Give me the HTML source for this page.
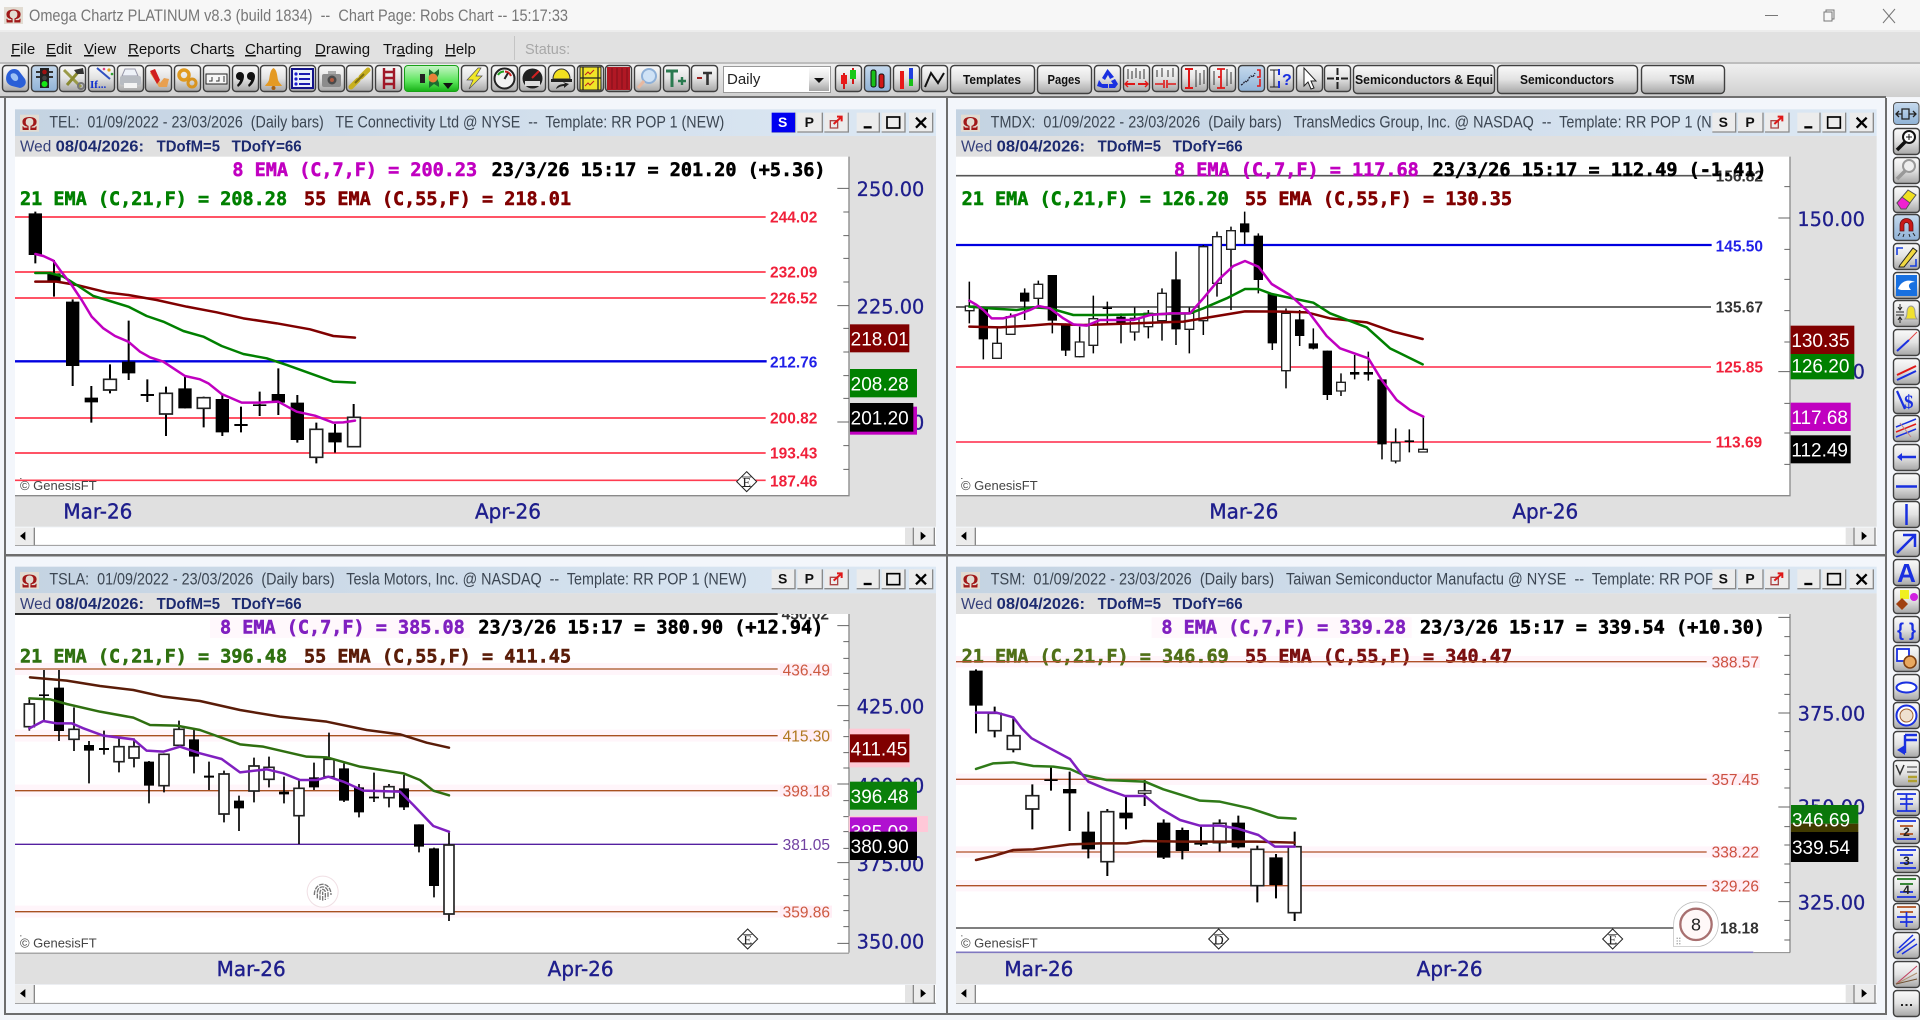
<!DOCTYPE html>
<html><head><meta charset="utf-8"><title>Omega Chartz</title>
<style>
html,body{margin:0;padding:0;background:#f3f5f9;width:1920px;height:1020px;overflow:hidden}
svg{display:block;position:absolute;left:0;top:0}
text{white-space:pre;font-family:"Liberation Sans",sans-serif}
.m{font:bold 55.5px "DejaVu Sans Mono","Liberation Mono",monospace;stroke-width:1.6}
.t{font-size:50px;fill:#3c4652}
.w{font-size:46px;fill:#35407a}
.d{font-size:48px;font-weight:bold;fill:#1c2a70}
.l{font-size:46.5px;font-weight:bold}
.a{font:58px "DejaVu Sans",sans-serif;fill:#1e1e8c;stroke:#1e1e8c;stroke-width:.8}
.x{font:60px "DejaVu Sans",sans-serif;fill:#1e1e8c;stroke:#1e1e8c;stroke-width:1.2}
.b{font-size:57px;fill:#fff}
.g{font-size:39px;fill:#444}
.mn{font-size:15px;fill:#111}
.tb{font-size:13px;font-weight:bold;fill:#111;text-anchor:middle}
.e{fill:none;stroke-width:7.5;stroke-linejoin:round;stroke-linecap:round}
.wk{fill:none;stroke:#000}
.tk{fill:none;stroke:#666;stroke-width:3}
</style></head><body>
<svg width="1920" height="1020" viewBox="0 0 1920 1020" xmlns="http://www.w3.org/2000/svg">
<defs>
<linearGradient id="bg" x1="0" y1="0" x2="0" y2="1"><stop offset="0" stop-color="#fbfbfb"/><stop offset=".5" stop-color="#e2e2e2"/><stop offset="1" stop-color="#a6a6a6"/></linearGradient>
<linearGradient id="bp" x1="0" y1="0" x2="0" y2="1"><stop offset="0" stop-color="#c6daee"/><stop offset="1" stop-color="#8fb2d6"/></linearGradient>
<linearGradient id="bgr" x1="0" y1="0" x2="0" y2="1"><stop offset="0" stop-color="#c8f5c8"/><stop offset=".6" stop-color="#5ce65c"/><stop offset="1" stop-color="#16b016"/></linearGradient>
<linearGradient id="tbg" x1="0" y1="0" x2="0" y2="1"><stop offset="0" stop-color="#efefef"/><stop offset="1" stop-color="#cfcfcf"/></linearGradient>
<linearGradient id="ttl" x1="0" y1="0" x2="1" y2="0"><stop offset="0" stop-color="#c4d3e2"/><stop offset="1" stop-color="#dce8f4"/></linearGradient>
<rect id="b" x=".5" y=".5" width="26" height="26" rx="3.5" fill="url(#bg)" stroke="#404040" stroke-width="1.4"/>
<rect id="p" x=".5" y=".5" width="26" height="26" rx="3.5" fill="url(#bp)" stroke="#404040" stroke-width="1.4"/>
<g id="om"><rect x="0" y="0" width="19" height="17" fill="#e2dcd2"/><text x="9.5" y="15.5" text-anchor="middle" style="font:bold 20px 'Liberation Serif',serif;fill:#a01818">Ω</text></g>
<g id="wc">
<rect width="70" height="59" fill="#ececec"/><path d="M0 58H70V0" fill="none" stroke="#8a8a8a" stroke-width="4"/><text x="33" y="43" text-anchor="middle" style="font:bold 42px 'Liberation Sans',sans-serif" fill="#111">S</text>
<rect x="77" width="75" height="59" fill="#ececec"/><path d="M77 58H152V0" fill="none" stroke="#8a8a8a" stroke-width="4"/><text x="113" y="43" text-anchor="middle" style="font:bold 42px 'Liberation Sans',sans-serif" fill="#111">P</text>
<rect x="158" width="72" height="59" fill="#ececec"/><path d="M158 58H230V0" fill="none" stroke="#8a8a8a" stroke-width="4"/><path d="M176 24h22v22h-22z" fill="none" stroke="#a44" stroke-width="4"/><path d="M186 34L208 14M196 12h14v14" fill="none" stroke="#e01818" stroke-width="6"/>
<rect x="255" width="68" height="59" fill="#ececec"/><path d="M255 58H323V0" fill="none" stroke="#8a8a8a" stroke-width="4"/><path d="M276 44h24" stroke="#000" stroke-width="7"/>
<rect x="330" width="70" height="59" fill="#ececec"/><path d="M330 58H400V0" fill="none" stroke="#8a8a8a" stroke-width="4"/><rect x="346" y="13" width="38" height="33" fill="none" stroke="#000" stroke-width="5"/>
<rect x="412" width="71" height="59" fill="#ececec"/><path d="M412 58H483V0" fill="none" stroke="#8a8a8a" stroke-width="4"/><path d="M433 15L463 45M463 15L433 45" stroke="#000" stroke-width="7"/>
</g>
<g id="dia"><path d="M0-30L30 0 0 30-30 0z" fill="#fff" stroke="#222" stroke-width="3"/><path d="M-14-14H14M-14 14H14" stroke="#222" stroke-width="2" fill="none"/></g>
</defs>

<!-- title bar -->
<rect width="1920" height="31" fill="#f7f7f7"/>
<rect y="30" width="1920" height="2" fill="#ececec"/>
<use href="#om" x="4" y="7"/>
<text x="29" y="21" textLength="539" lengthAdjust="spacingAndGlyphs" style="font-size:16.5px" fill="#777">Omega Chartz PLATINUM v8.3 (build 1834)  --  Chart Page: Robs Chart -- 15:17:33</text>
<path d="M1765 15.5H1778" stroke="#777" stroke-width="1"/>
<path d="M1824 12h8v9h-8zM1826 12v-2h8v9h-2" fill="none" stroke="#777"/>
<path d="M1883 9L1895 23M1895 9L1883 23" stroke="#777"/>

<!-- menu -->
<rect y="32" width="1920" height="31" fill="#e1e1e1"/>
<rect y="62" width="1920" height="2" fill="#bdbdbd"/>
<text class="mn" y="54" x="11"><tspan text-decoration="underline">F</tspan>ile</text>
<text class="mn" y="54" x="46"><tspan text-decoration="underline">E</tspan>dit</text>
<text class="mn" y="54" x="84"><tspan text-decoration="underline">V</tspan>iew</text>
<text class="mn" y="54" x="128"><tspan text-decoration="underline">R</tspan>eports</text>
<text class="mn" y="54" x="190">Chart<tspan text-decoration="underline">s</tspan></text>
<text class="mn" y="54" x="245"><tspan text-decoration="underline">C</tspan>harting</text>
<text class="mn" y="54" x="315"><tspan text-decoration="underline">D</tspan>rawing</text>
<text class="mn" y="54" x="383">Tr<tspan text-decoration="underline">a</tspan>ding</text>
<text class="mn" y="54" x="445"><tspan text-decoration="underline">H</tspan>elp</text>
<path d="M514.5 36V60" stroke="#c4c4c4"/>
<text x="525" y="54" style="font-size:14.5px" fill="#a8a8a8">Status:</text>

<!-- toolbar -->
<rect y="64" width="1920" height="33" fill="url(#tbg)"/>
<rect y="96" width="1886" height="2" fill="#707070"/>
<g transform="translate(2,65)"><use href="#b"/><path d="M5 9C8 3 14 3 17 6L23 14C25 18 23 22 18 23L10 21C4 19 3 14 5 9z" fill="#2a5fd8"/><path d="M9 9C12 7 15 9 16 12C17 16 13 17 11 15C9 13 8 11 9 9z" fill="#9cc0f4"/></g>
<g transform="translate(31,65)"><use href="#p"/><rect x="9" y="3" width="9" height="20" fill="#222"/><path d="M5 7h4M18 7h4M5 12h4M18 12h4" stroke="#333" stroke-width="2"/><circle cx="13.5" cy="7" r="2.3" fill="#a01010"/><circle cx="13.5" cy="13" r="2.3" fill="#444"/><circle cx="13.5" cy="19" r="3" fill="#16e816"/></g>
<g transform="translate(59,65)"><use href="#b"/><path d="M5 5L22 22" stroke="#9a9a48" stroke-width="3"/><path d="M21 5L8 20" stroke="#8a8a30" stroke-width="3"/><path d="M15 5L24 3L25 9L18 9z" fill="#333"/><circle cx="22" cy="21" r="3" fill="none" stroke="#777" stroke-width="2"/></g>
<g transform="translate(88,65)"><use href="#b"/><text x="2" y="23" style="font:bold 11px 'Liberation Serif',serif" fill="#1030d0">If...</text><path d="M9 3L22 14" stroke="#3050c0" stroke-width="2"/><circle cx="21" cy="5" r="1.6" fill="#e0a020"/><circle cx="16" cy="4" r="1.3" fill="#e04080"/><circle cx="24" cy="9" r="1.3" fill="#30a030"/></g>
<g transform="translate(117,65)"><use href="#b"/><path d="M8 4h10l3 7H5z" fill="#eef2f8" stroke="#99a"/><rect x="3" y="11" width="21" height="9" rx="2" fill="#b8bcc2"/><rect x="7" y="18" width="13" height="5" fill="#f4f4f4"/></g>
<g transform="translate(145,65)"><use href="#b"/><path d="M5 8L14 22H22L24 14L19 13L15 18L10 4z" fill="#e8a050"/><path d="M5 6L10 4L15 15L12 19z" fill="#d02020"/></g>
<g transform="translate(174,65)"><use href="#b"/><circle cx="10" cy="10" r="5" fill="none" stroke="#e09a20" stroke-width="3.5"/><circle cx="18" cy="18" r="4" fill="none" stroke="#d89420" stroke-width="3"/></g>
<g transform="translate(203,65)"><use href="#b"/><rect x="3" y="9" width="21" height="10" fill="#f6f6f6" stroke="#222"/><path d="M9 12v4h-3M16 12v4h-3M21 11v6" fill="none" stroke="#333"/></g>
<g transform="translate(232,65)"><use href="#b"/><path d="M4 11a4 4 0 1 1 8 0C12 16 9 20 6 22L5 20C7 18 8 16 8 15C6 15 4 14 4 11zM15 11a4 4 0 1 1 8 0C23 16 20 20 17 22L16 20C18 18 19 16 19 15C17 15 15 14 15 11z" fill="#111"/></g>
<g transform="translate(260,65)"><use href="#b"/><path d="M13.5 3C10 5 10 10 9 15C8 18 6 19 5 21H22C21 19 19 18 18 15C17 10 17 5 13.5 3z" fill="#e49a24"/><circle cx="13.5" cy="23" r="2" fill="#a86010"/></g>
<g transform="translate(289,65)"><use href="#b"/><rect x="3" y="4" width="21" height="19" fill="#eaf0fa" stroke="#14148a" stroke-width="2"/><path d="M10 9h11M10 14h11M10 19h11" stroke="#1a1ab0" stroke-width="2"/><circle cx="7" cy="9" r="1.6" fill="#1a1ad0"/><circle cx="7" cy="14" r="1.6" fill="#1a1ad0"/><circle cx="7" cy="19" r="1.6" fill="#1a1ad0"/></g>
<g transform="translate(318,65)"><use href="#b"/><rect x="4" y="9" width="19" height="13" rx="2" fill="#8c8c8c"/><circle cx="14" cy="15" r="4.5" fill="#4a4a4a"/><circle cx="14" cy="15" r="2" fill="#b05a40"/><rect x="10" y="6" width="8" height="3" fill="#aaa"/></g>
<g transform="translate(346,65)"><use href="#b"/><path d="M5 22L12 15M15 12L22 5" stroke="#c8b020" stroke-width="5" stroke-linecap="round"/><path d="M9 18L18 9" stroke="#807010" stroke-width="2"/></g>
<g transform="translate(375,65)"><use href="#b"/><path d="M9 3V24M19 3V24M9 7H19M9 13H19M9 19H19" stroke="#a01828" stroke-width="2.4" fill="none"/></g>
<g transform="translate(404,65)"><rect x=".5" y=".5" width="54" height="26" rx="3.5" fill="url(#bgr)" stroke="#18a018"/><path d="M16 9h5v9h-5z" fill="#222"/><path d="M25 4l5 4 5-4v5l-2 4 2 5v4l-5-3-5 4v-5l1-5-1-3z" fill="#1c6c30"/><circle cx="29" cy="13" r="4.5" fill="#e88038"/><path d="M39 18h10l-5 6z" fill="#111"/></g>
<g transform="translate(461,65)"><use href="#b"/><path d="M17 3L6 15H12L8 24L21 11H15L20 3z" fill="#f0e828" stroke="#555" stroke-width=".7"/></g>
<g transform="translate(491,65)"><use href="#b"/><circle cx="13.5" cy="13.5" r="10" fill="#f2f2f2" stroke="#222" stroke-width="2"/><path d="M7 10A7 7 0 0 1 13 6.5" stroke="#20a020" stroke-width="2" fill="none"/><path d="M14 6.5A7 7 0 0 1 20 11" stroke="#d02020" stroke-width="2" fill="none"/><path d="M13.5 14L17 8" stroke="#222" stroke-width="2"/></g>
<g transform="translate(519,65)"><use href="#b"/><circle cx="13.5" cy="13.5" r="10" fill="#222"/><path d="M6 16H21V21H6z" fill="#ddd"/><path d="M13 13L20 6" stroke="#d02020" stroke-width="2"/></g>
<g transform="translate(548,65)"><use href="#b"/><path d="M5 14C5 8 9 4 13.5 4S22 8 22 14z" fill="#f2e020" stroke="#333"/><path d="M3 14H24V17H3z" fill="#222"/><path d="M8 24C9 20 13 19 17 19L15 17L21 19L16 23L16 21C13 21 11 22 8 24z" fill="#222"/></g>
<g transform="translate(577,65)"><use href="#b"/><rect x="3" y="2" width="21" height="23" fill="#f0e428" stroke="#222"/><path d="M3 13H24M6 2v23M21 2v23" stroke="#222" stroke-width="1.2"/><path d="M8 10l3-3 2 2 4-4M8 21l3-3 2 2 4-4" stroke="#c02020" fill="none"/></g>
<g transform="translate(605,65)"><use href="#b"/><rect x="2" y="2" width="23" height="23" fill="#b01824"/><path d="M7 3v21M12 3v21M17 3v21M22 3v21" stroke="#80101a"/></g>
<g transform="translate(634,65)"><use href="#b"/><circle cx="15" cy="11" r="7" fill="#cfe2f6" stroke="#8eb0d8" stroke-width="2"/><path d="M10 16L4 23" stroke="#e8b8a0" stroke-width="3"/></g>
<g transform="translate(663,65)"><use href="#b"/><path d="M3 6H15M9 6V22" stroke="#2a7a50" stroke-width="3" fill="none"/><path d="M15 16h8M19 12v8" stroke="#2a7a50" stroke-width="2.4"/></g>
<g transform="translate(691,65)"><use href="#b"/><path d="M6 13h5" stroke="#a02020" stroke-width="2"/><path d="M12 8h9M16.5 8V20" stroke="#333" stroke-width="2.6"/></g>
<!-- combo -->
<rect x="723.5" y="66.5" width="107" height="26" fill="#fff" stroke="#9a9a9a"/>
<text x="727" y="84" style="font-size:15px" fill="#222">Daily</text>
<rect x="809" y="68" width="20" height="23" fill="url(#bg)"/><path d="M814 78h10l-5 5z" fill="#111"/>
<g transform="translate(835,65)"><use href="#b"/><path d="M9 8V24M18 3V19" stroke="#d01818" stroke-width="2"/><rect x="6" y="10" width="6" height="9" fill="#e81818"/><rect x="15" y="5" width="6" height="9" fill="#18c818"/></g>
<g transform="translate(864,65)"><use href="#p"/><rect x="7" y="5" width="5" height="17" rx="2" fill="#18c018" stroke="#111"/><rect x="15" y="9" width="5" height="14" rx="2" fill="#d01818" stroke="#111"/></g>
<g transform="translate(893,65)"><use href="#b"/><path d="M9 6V24" stroke="#e81818" stroke-width="4"/><path d="M18 3V14" stroke="#2040e0" stroke-width="4"/><path d="M18 14V21" stroke="#18c018" stroke-width="4"/></g>
<g transform="translate(921,65)"><use href="#b"/><path d="M4 22L10 8L17 18L23 8" stroke="#111" stroke-width="2" fill="none"/></g>
<!-- text buttons -->
<g>
<rect x="950.5" y="65.5" width="84" height="28" rx="4" fill="url(#bg)" stroke="#404040" stroke-width="1.4"/><text class="tb" x="992" y="84" textLength="58" lengthAdjust="spacingAndGlyphs">Templates</text>
<rect x="1037.5" y="65.5" width="54" height="28" rx="4" fill="url(#bg)" stroke="#404040" stroke-width="1.4"/><text class="tb" x="1064" y="84" textLength="33" lengthAdjust="spacingAndGlyphs">Pages</text>
<rect x="1353.5" y="65.5" width="141" height="28" rx="4" fill="url(#bg)" stroke="#404040" stroke-width="1.4"/><text class="tb" x="1424" y="84" textLength="138" lengthAdjust="spacingAndGlyphs">Semiconductors &amp; Equi</text>
<rect x="1497.5" y="65.5" width="140" height="28" rx="4" fill="url(#bg)" stroke="#404040" stroke-width="1.4"/><text class="tb" x="1567" y="84" textLength="94" lengthAdjust="spacingAndGlyphs">Semiconductors</text>
<rect x="1641.5" y="65.5" width="83" height="28" rx="4" fill="url(#bg)" stroke="#404040" stroke-width="1.4"/><text class="tb" x="1682" y="84" textLength="25" lengthAdjust="spacingAndGlyphs">TSM</text>
</g>
<g transform="translate(1094,65)"><use href="#b"/><path d="M13.5 4L8 13L11 15L14 10L16 14L20 12zM5 15L3 21L9 23H14V19H8zM21 14L17 16L19 19H15V23H21L24 19z" fill="#1a30e0"/></g>
<g transform="translate(1123,65)"><use href="#b"/><path d="M5 4v10M9 6v8M13 3v10M17 6v8M21 4v10" stroke="#333"/><path d="M3 19h9M24 19h-9" stroke="#e01818" stroke-width="2"/><path d="M5 16l-3 3 3 3M22 16l3 3-3 3" fill="none" stroke="#e01818" stroke-width="1.4"/></g>
<g transform="translate(1152,65)"><use href="#b"/><path d="M5 5v7M10 3v9M16 5v7M21 3v9" stroke="#333"/><path d="M3 19h8M24 19h-8M12 15v8M15 15v8" stroke="#e01818" stroke-width="1.6"/></g>
<g transform="translate(1181,65)"><use href="#b"/><path d="M15 5v17M19 8v12M23 5v14" stroke="#333"/><path d="M8 4V23M4 4h8M4 23h8" stroke="#e01818" stroke-width="2" fill="none"/></g>
<g transform="translate(1209,65)"><use href="#b"/><path d="M5 6v14M18 4v17M22 7v12" stroke="#333"/><path d="M12 4V23M8 4h8M8 23h8M12 12h-3" stroke="#e01818" stroke-width="1.8" fill="none"/></g>
<g transform="translate(1238,65)"><use href="#p"/><path d="M3 20l2-1 2-3 2 1 2-4 2-2 2 1 2-4" fill="none" stroke="#223" stroke-width="1.3" stroke-dasharray="2 1"/><path d="M19 5h3v7h-3M22 14v7h-3" fill="none" stroke="#e01818" stroke-width="1.6"/></g>
<g transform="translate(1267,65)"><use href="#b"/><path d="M7 5v17M3 5h8M3 22h8" stroke="#222" fill="none"/><path d="M12 4v6M12 16v7" stroke="#1a30e0" stroke-width="2"/><text x="15" y="20" style="font:bold 16px 'Liberation Sans',sans-serif" fill="#1a30e0">?</text></g>
<g transform="translate(1296,65)"><use href="#b"/><path d="M8 3V21L12 17L15 24L18 23L15 16H20z" fill="#fff" stroke="#222"/></g>
<g transform="translate(1324,65)"><use href="#b"/><path d="M3 13.5H10M17 13.5H24M13.5 3V10M13.5 17V24" stroke="#222" stroke-width="2"/><rect x="12" y="12" width="3" height="3" fill="#222"/></g>

<!-- ========= pane backgrounds ======= -->
<rect x="4" y="98" width="1882" height="916" fill="#f3f6fb"/>
<path d="M5 98V1014H1886V98" fill="none" stroke="#6e6e6e" stroke-width="2"/>
<rect x="4" y="554" width="1882" height="2.5" fill="#6e6e6e"/>
<rect x="946" y="98" width="2" height="916" fill="#6e6e6e"/>
<rect x="1887" y="98" width="33" height="922" fill="#f5f7fb"/>

<!-- ===== PANE 1 ===== -->
<g transform="translate(0,100) scale(.33333)">
<rect x="45" y="28" width="2763" height="80" fill="url(#ttl)"/>
<rect x="45" y="108" width="2763" height="1172" fill="#e0e0e0"/>
<rect x="45" y="170" width="2502" height="1017" fill="#fff"/>
<path d="M45 1187H2547V170" fill="none" stroke="#8a8a8a" stroke-width="4"/>
<rect x="45" y="1283" width="2763" height="52" fill="#fff"/><path d="M45 1336H2808" stroke="#999" stroke-width="3"/>
<rect x="45" y="1283" width="58" height="52" fill="#ececec"/><path d="M103 1283V1336" stroke="#888" stroke-width="4"/><path d="M76 1295V1321L60 1308z" fill="#000"/>
<rect x="2715" y="1283" width="23" height="52" fill="#e4e4e4"/><rect x="2740" y="1283" width="62" height="52" fill="#ececec"/><path d="M2740 1283V1336H2803V1283" fill="none" stroke="#888" stroke-width="4"/><path d="M2762 1295V1321L2778 1308z" fill="#000"/>
<use href="#om" transform="translate(60,44) scale(3)"/>
<text class="t" x="148" y="82" textLength="2025" lengthAdjust="spacingAndGlyphs">TEL:  01/09/2022 - 23/03/2026  (Daily bars)   TE Connectivity Ltd @ NYSE  --  Template: RR POP 1 (NEW)</text>
<use href="#wc" x="2315" y="38"/>
<rect x="2315" y="38" width="70" height="59" fill="#0000f0"/><text x="2348" y="81" text-anchor="middle" style="font:bold 42px 'Liberation Sans',sans-serif" fill="#fff">S</text>
<text class="w" x="60" y="155">Wed</text><text class="d" x="167" y="155" textLength="265" lengthAdjust="spacingAndGlyphs">08/04/2026:</text><text class="d" x="470" y="155" textLength="190" lengthAdjust="spacingAndGlyphs">TDofM=5</text><text class="d" x="695" y="155" textLength="210" lengthAdjust="spacingAndGlyphs">TDofY=66</text>
<path d="M45 351H2297M45 516H2297M45 594H2297M45 954H2297M45 1059H2297M45 1141H2297" stroke="#ff3c50" stroke-width="5" fill="none"/>
<path d="M45 784H2300" stroke="#0000e0" stroke-width="7"/>
<text class="l" x="2310" y="368" fill="#f0203a">244.02</text><text class="l" x="2310" y="533" fill="#f0203a">232.09</text><text class="l" x="2310" y="611" fill="#f0203a">226.52</text><text class="l" x="2310" y="803" fill="#2020e8">212.76</text><text class="l" x="2310" y="971" fill="#f0203a">200.82</text><text class="l" x="2310" y="1076" fill="#f0203a">193.43</text><text class="l" x="2310" y="1159" fill="#f0203a">187.46</text>
<path class="wk" stroke-width="6" d="M106 335V490M162 480V590M218 598V858M274 858V968M330 793V880M386 662V840M442 838V906M498 860V1008M555 830V925M611 890V982M667 885V1008M723 920V997M779 875V948M835 805V945M892 885V1028M949 968V1090M1005 972V1058M1061 912V1040"/>
<path d="M86 340h40v125h-40zM142 520h40v25h-40zM198 605h40v193h-40zM254 893h40v14h-40zM366 785h40v35h-40zM422 882h40v6h-40zM535 865h40v60h-40zM647 897h40v100h-40zM703 972h40v6h-40zM759 913h40v5h-40zM815 882h40v26h-40zM872 908h40v112h-40zM985 998h40v29h-40z" fill="#000"/>
<path d="M311 838h38v32h-38zM479 880h38v62h-38zM592 893h38v32h-38zM930 988h38v84h-38zM1043 952h38v88h-38z" fill="#fff" stroke="#222" stroke-width="5"/>
<polyline class="e" stroke="#800000" points="106,545 170,545 230,555 320,577 385,585 470,600 560,620 650,637 730,655 830,670 930,688 1000,708 1065,713"/>
<polyline class="e" stroke="#008000" points="106,519 150,519 190,530 230,555 280,588 320,600 385,620 440,648 490,665 550,693 610,710 665,738 730,762 800,775 860,795 930,820 1000,845 1065,848"/>
<polyline class="e" stroke="#c000c0" points="106,462 130,468 160,482 180,510 215,555 245,600 275,650 310,685 345,708 385,725 420,755 450,772 490,785 520,805 555,828 600,838 625,850 665,882 725,908 780,908 835,905 890,935 945,947 1000,968 1030,967 1065,962"/>
<text class="m" x="697" y="228" fill="#c000c0" stroke="#c000c0">8 EMA (C,7,F) = 200.23</text>
<text class="m" x="1475" y="228" fill="#000" stroke="#000">23/3/26 15:17 = 201.20 (+5.36)</text>
<text class="m" x="60" y="315" fill="#008000" stroke="#008000">21 EMA (C,21,F) = 208.28</text>
<text class="m" x="912" y="315" fill="#800000" stroke="#800000">55 EMA (C,55,F) = 218.01</text>
<text class="g" x="60" y="1170">© GenesisFT</text><rect x="61" y="1134" width="3" height="3" fill="#333"/>
<use href="#dia" x="2240" y="1145"/><text x="2240" y="1161" text-anchor="middle" style="font:42px 'Liberation Serif',serif" fill="#222">E</text>
<text class="x" x="190" y="1255">Mar-26</text><text class="x" x="1425" y="1255">Apr-26</text>
<path class="tk" d="M2512 265H2547M2530 336H2547M2530 407H2547M2530 475H2547M2530 546H2547M2512 617H2547M2530 685H2547M2530 756H2547M2530 827H2547M2530 895H2547M2512 966H2547M2530 1037H2547M2530 1108H2547"/>
<text class="a" x="2570" y="288">250.00</text><text class="a" x="2570" y="640">225.00</text><text class="a" x="2570" y="988">200.00</text>
<rect x="2550" y="673" width="178" height="84" fill="#800000"/><text class="b" x="2552" y="737">218.01</text>
<rect x="2550" y="807" width="201" height="85" fill="#008000"/><text class="b" x="2552" y="872">208.28</text>
<rect x="2550" y="920" width="201" height="84" fill="#c000c0"/>
<rect x="2550" y="909" width="190" height="86" fill="#000"/><text class="b" x="2552" y="973">201.20</text>
</g>

<!-- ===== PANE 2 ===== -->
<g transform="translate(950,100) scale(.33333)">
<rect x="18" y="28" width="2762" height="80" fill="url(#ttl)"/>
<rect x="18" y="108" width="2762" height="1172" fill="#e0e0e0"/>
<rect x="18" y="170" width="2502" height="1017" fill="#fff"/>
<path d="M18 1187H2520V170" fill="none" stroke="#8a8a8a" stroke-width="4"/>
<rect x="18" y="1283" width="2762" height="52" fill="#fff"/><path d="M18 1336H2780" stroke="#999" stroke-width="3"/>
<rect x="18" y="1283" width="58" height="52" fill="#ececec"/><path d="M76 1283V1336" stroke="#888" stroke-width="4"/><path d="M49 1295V1321L33 1308z" fill="#000"/>
<rect x="2687" y="1283" width="23" height="52" fill="#e4e4e4"/><rect x="2712" y="1283" width="62" height="52" fill="#ececec"/><path d="M2712 1283V1336H2775V1283" fill="none" stroke="#888" stroke-width="4"/><path d="M2735 1295V1321L2751 1308z" fill="#000"/>
<use href="#om" transform="translate(33,44) scale(3)"/>
<text class="t" x="122" y="82" textLength="2163" lengthAdjust="spacingAndGlyphs">TMDX:  01/09/2022 - 23/03/2026  (Daily bars)   TransMedics Group, Inc. @ NASDAQ  --  Template: RR POP 1 (N</text>
<use href="#wc" x="2287" y="38"/>
<text class="w" x="33" y="155">Wed</text><text class="d" x="140" y="155" textLength="265" lengthAdjust="spacingAndGlyphs">08/04/2026:</text><text class="d" x="443" y="155" textLength="190" lengthAdjust="spacingAndGlyphs">TDofM=5</text><text class="d" x="668" y="155" textLength="210" lengthAdjust="spacingAndGlyphs">TDofY=66</text>
<path d="M18 227H2285M18 621H2283" stroke="#555" stroke-width="5" fill="none"/>
<path d="M18 801H2283M18 1026H2283" stroke="#ff4660" stroke-width="5" fill="none"/>
<path d="M18 435H2285" stroke="#0000e0" stroke-width="7"/>
<text class="l" x="2297" y="244" fill="#333">156.82</text><text class="l" x="2297" y="454" fill="#2020e8">145.50</text><text class="l" x="2297" y="638" fill="#333">135.67</text><text class="l" x="2297" y="818" fill="#f0203a">125.85</text><text class="l" x="2297" y="1043" fill="#f0203a">113.69</text>
<path class="wk" stroke-width="4.5" d="M58 545V670M100 620V778M142 680V775M182 640V705M224 565V660M265 542V618M307 525V700M347 670V768M389 680V772M430 587V760M472 605V672M513 640V730M554 622V722M595 630V715M636 565V722M678 455V735M718 622V760M760 435V705M801 395V590M843 380V630M884 335V432M925 400V580M967 580V750M1008 625V865M1049 630V738M1090 685V748M1132 752V900M1173 820V888M1214 765V838M1255 755V842M1296 838V1078M1337 985V1090M1378 988V1057M1420 950V1050"/>
<path d="M86 622h28v96h-28zM210 578h28v27h-28zM293 525h28v137h-28zM333 672h28v80h-28zM458 622h28v5h-28zM499 650h28v22h-28zM664 538h28v150h-28zM870 370h28v27h-28zM911 407h28v133h-28zM953 582h28v148h-28zM1035 658h28v50h-28zM1076 730h28v16h-28zM1118 752h28v133h-28zM1200 816h28v8h-28zM1241 816h28v8h-28zM1282 838h28v195h-28zM1364 1021h28v5h-28z" fill="#000"/>
<path d="M46 618h26v14h-26zM128 730h26v45h-26zM169 650h26v53h-26zM252 553h26v42h-26zM376 726h26v44h-26zM417 656h26v80h-26zM541 655h26v41h-26zM582 640h26v40h-26zM623 580h26v82h-26zM705 640h26v48h-26zM747 440h26v222h-26zM788 410h26v140h-26zM830 392h26v56h-26zM995 640h26v172h-26zM1160 847h26v26h-26zM1324 1028h26v55h-26zM1406 1048h26v8h-26z" fill="#fff" stroke="#222" stroke-width="4"/>
<polyline class="e" stroke="#800000" points="58,680 150,682 240,677 300,672 400,675 550,670 700,665 790,650 885,634 1000,635 1070,637 1140,655 1250,667 1330,695 1418,717"/>
<polyline class="e" stroke="#008000" points="58,620 120,625 200,630 250,622 300,625 370,645 460,645 600,643 720,640 760,625 830,595 885,567 925,567 965,582 1090,608 1140,640 1250,682 1320,745 1418,793"/>
<polyline class="e" stroke="#c000c0" points="58,602 80,615 100,630 125,655 160,655 200,645 240,630 265,618 300,625 340,655 370,673 410,677 450,660 510,660 550,660 600,645 660,640 720,640 760,595 810,535 850,498 885,483 925,500 965,552 1020,585 1075,635 1130,708 1170,745 1255,775 1295,840 1340,900 1380,930 1420,950"/>
<text class="m" x="672" y="228" fill="#c000c0" stroke="#c000c0">8 EMA (C,7,F) = 117.68</text>
<text class="m" x="1448" y="228" fill="#000" stroke="#000">23/3/26 15:17 = 112.49 (-1.41)</text>
<text class="m" x="35" y="315" fill="#008000" stroke="#008000">21 EMA (C,21,F) = 126.20</text>
<text class="m" x="885" y="315" fill="#800000" stroke="#800000">55 EMA (C,55,F) = 130.35</text>
<text class="g" x="33" y="1170">© GenesisFT</text><rect x="34" y="1134" width="3" height="3" fill="#333"/>
<text class="x" x="778" y="1255">Mar-26</text><text class="x" x="1687" y="1255">Apr-26</text>
<path class="tk" d="M2503 260H2520M2485 354H2520M2503 448H2520M2503 538H2520M2503 632H2520M2503 726H2520M2485 815H2520M2503 910H2520M2503 999H2520M2503 1093H2520"/>
<text class="a" x="2542" y="378">150.00</text><text class="a" x="2542" y="836">125.00</text>
<rect x="2522" y="677" width="191" height="85" fill="#800000"/><text class="b" x="2524" y="741">130.35</text>
<rect x="2522" y="762" width="191" height="76" fill="#008000"/><text class="b" x="2524" y="817">126.20</text>
<rect x="2522" y="908" width="180" height="85" fill="#c000c0"/><text class="b" x="2524" y="972">117.68</text>
<rect x="2522" y="1006" width="180" height="84" fill="#000"/><text class="b" x="2524" y="1070">112.49</text>
</g>

<!-- ===== PANE 3 ===== -->
<g transform="translate(0,560) scale(.33333)">
<rect x="45" y="20" width="2763" height="80" fill="url(#ttl)"/>
<rect x="45" y="100" width="2763" height="1173" fill="#e0e0e0"/>
<rect x="45" y="162" width="2502" height="1016" fill="#fff"/>
<text class="l" x="2345" y="178" fill="#333">450.02</text>
<rect x="45" y="100" width="2763" height="62" fill="#e0e0e0"/>
<rect x="45" y="1178" width="2502" height="3" fill="#8a8a8a"/>
<path d="M2547 162V1178" stroke="#8a8a8a" stroke-width="4"/>
<path d="M45 162H2333" stroke="#111" stroke-width="5"/>
<rect x="45" y="1275" width="2763" height="54" fill="#fff"/><path d="M45 1330H2808" stroke="#999" stroke-width="3"/>
<rect x="45" y="1275" width="58" height="54" fill="#ececec"/><path d="M103 1275V1330" stroke="#888" stroke-width="4"/><path d="M76 1287V1313L60 1300z" fill="#000"/>
<rect x="2715" y="1275" width="23" height="54" fill="#e4e4e4"/><rect x="2740" y="1275" width="62" height="54" fill="#ececec"/><path d="M2740 1275V1330H2803V1275" fill="none" stroke="#888" stroke-width="4"/><path d="M2762 1287V1313L2778 1300z" fill="#000"/>
<use href="#om" transform="translate(60,36) scale(3)"/>
<text class="t" x="148" y="74" textLength="2092" lengthAdjust="spacingAndGlyphs">TSLA:  01/09/2022 - 23/03/2026  (Daily bars)   Tesla Motors, Inc. @ NASDAQ  --  Template: RR POP 1 (NEW)</text>
<use href="#wc" x="2315" y="28"/>
<text class="w" x="60" y="147">Wed</text><text class="d" x="167" y="147" textLength="265" lengthAdjust="spacingAndGlyphs">08/04/2026:</text><text class="d" x="470" y="147" textLength="190" lengthAdjust="spacingAndGlyphs">TDofM=5</text><text class="d" x="695" y="147" textLength="210" lengthAdjust="spacingAndGlyphs">TDofY=66</text>
<path d="M45 327H2496M45 527H2496M45 692H2496M45 1055H2496" stroke="#fff5fa" stroke-width="36" fill="none"/>
<rect x="630" y="172" width="780" height="62" fill="#fff8fc"/>
<rect x="2340" y="312" width="156" height="36" fill="#ffeef5"/><rect x="2340" y="508" width="156" height="36" fill="#ffeef5"/><rect x="2340" y="674" width="156" height="36" fill="#ffeef5"/><rect x="2340" y="1037" width="156" height="36" fill="#ffeef5"/>
<path d="M45 327H2333M45 527H2333M45 692H2333M45 1055H2333" stroke="#a85020" stroke-width="4" fill="none"/>
<path d="M45 853H2333" stroke="#5520a0" stroke-width="4"/>
<text class="l" x="2348" y="346" fill="#cc5a40" style="font-weight:normal">436.49</text><text class="l" x="2348" y="544" fill="#b07820" style="font-weight:normal">415.30</text><text class="l" x="2348" y="709" fill="#cc5a40" style="font-weight:normal">398.18</text><text class="l" x="2348" y="870" fill="#7040a0" style="font-weight:normal">381.05</text><text class="l" x="2348" y="1072" fill="#cc5a40" style="font-weight:normal">359.86</text>
<path class="wk" stroke-width="5" d="M88 415V512M132 330V480M177 330V543M222 442V573M267 543V670M312 512V584M357 535V637M402 535V622M447 603V730M492 580V697M537 482V558M582 510V640M627 605V690M672 632V787M717 707V813M762 593V727M807 590V682M852 650V730M897 660V852M942 608V690M987 518V650M1032 610V726M1077 672V772M1122 638V726M1167 672V742M1212 645V750M1257 793V877M1302 863V1012M1347 815V1083"/>
<path d="M162 383h30v130h-30zM252 555h30v17h-30zM432 605h30v72h-30zM567 538h30v52h-30zM702 722h30v23h-30zM927 652h30v30h-30zM1017 625h30v97h-30zM1062 682h30v75h-30zM1197 685h30v57h-30zM1242 793h30v67h-30zM1287 865h30v113h-30zM117 403h30v5h-30zM297 564h30v6h-30zM612 647h30v6h-30zM837 695h30v8h-30zM1107 710h30v5h-30z" fill="#000"/>
<path d="M73 432h30v68h-30zM207 508h30v30h-30zM342 560h30v45h-30zM387 560h30v34h-30zM477 583h30v94h-30zM522 508h30v48h-30zM657 642h30v120h-30zM747 618h30v75h-30zM792 622h30v36h-30zM882 685h30v82h-30zM972 598h30v52h-30zM1152 680h30v33h-30zM1332 855h30v207h-30z" fill="#fff" stroke="#222" stroke-width="5"/>
<polyline class="e" stroke="#5a1c08" points="90,352 200,362 300,378 400,390 490,410 600,423 720,450 840,470 980,485 1100,510 1200,523 1280,548 1347,563"/>
<polyline class="e" stroke="#2f6f10" points="88,415 150,418 200,432 300,455 400,473 450,495 530,497 600,510 720,553 790,560 920,590 980,592 1080,620 1210,640 1260,660 1300,692 1347,706"/>
<polyline class="e" stroke="#8020c0" points="88,505 130,483 170,490 215,490 250,505 310,527 400,538 440,572 490,575 540,560 600,580 665,597 720,637 800,628 850,640 900,660 950,660 985,650 1030,665 1090,692 1200,695 1240,735 1300,798 1347,815"/>
<text class="m" x="660" y="220" fill="#8020c0" stroke="#8020c0">8 EMA (C,7,F) = 385.08</text>
<text class="m" x="1435" y="220" fill="#000" stroke="#000">23/3/26 15:17 = 380.90 (+12.94)</text>
<text class="m" x="60" y="307" fill="#2f7010" stroke="#2f7010">21 EMA (C,21,F) = 396.48</text>
<text class="m" x="912" y="307" fill="#5a1c08" stroke="#5a1c08">55 EMA (C,55,F) = 411.45</text>
<text class="g" x="60" y="1162">© GenesisFT</text><rect x="61" y="1126" width="3" height="3" fill="#333"/>
<circle cx="968" cy="995" r="48" fill="#f0dfe4"/><circle cx="968" cy="995" r="45" fill="#fff"/>
<path d="M943 1005C943 962 993 962 993 1005M952 1015V998C952 975 984 975 984 998V1015M960 1020V998C960 985 976 985 976 998V1020M968 1022V995" fill="none" stroke="#777" stroke-width="4" stroke-dasharray="14 3"/>
<use href="#dia" x="2243" y="1137"/><text x="2243" y="1153" text-anchor="middle" style="font:42px 'Liberation Serif',serif" fill="#222">E</text>
<text class="x" x="650" y="1248">Mar-26</text><text class="x" x="1643" y="1248">Apr-26</text>
<path class="tk" d="M2512 197H2547M2530 245H2547M2530 295H2547M2530 340H2547M2530 388H2547M2512 437H2547M2530 482H2547M2530 530H2547M2530 578H2547M2530 624H2547M2512 672H2547M2530 722H2547M2530 770H2547M2530 815H2547M2530 865H2547M2512 908H2547M2530 958H2547M2530 1007H2547M2530 1052H2547M2530 1100H2547M2512 1150H2547"/>
<text class="a" x="2570" y="461">425.00</text><text class="a" x="2570" y="697">400.00</text><text class="a" x="2570" y="933">375.00</text><text class="a" x="2570" y="1165">350.00</text>
<rect x="2548" y="506" width="182" height="116" fill="#ffc8d4"/><rect x="2550" y="523" width="178" height="84" fill="#800000"/><text class="b" x="2552" y="587">411.45</text>
<rect x="2546" y="768" width="238" height="48" fill="#ffc8d8"/>
<rect x="2550" y="772" width="201" height="84" fill="#b010d0"/><text class="b" x="2552" y="836">385.08</text>
<rect x="2550" y="665" width="201" height="84" fill="#0a800a"/><text class="b" x="2552" y="729">396.48</text>
<rect x="2550" y="815" width="201" height="85" fill="#000"/><text class="b" x="2552" y="879">380.90</text>
</g>

<!-- ===== PANE 4 ===== -->
<g transform="translate(950,560) scale(.33333)">
<rect x="18" y="20" width="2762" height="80" fill="url(#ttl)"/>
<rect x="18" y="100" width="2762" height="1173" fill="#e0e0e0"/>
<rect x="18" y="162" width="2502" height="1016" fill="#fff"/>
<path d="M2520 162V1178" stroke="#8a8a8a" stroke-width="4"/>
<path d="M18 1177H2410" stroke="#8078c0" stroke-width="5"/><path d="M2410 1178H2520" stroke="#8a8a8a" stroke-width="3"/>
<rect x="18" y="1275" width="2762" height="54" fill="#fff"/><path d="M18 1330H2780" stroke="#999" stroke-width="3"/>
<rect x="18" y="1275" width="58" height="54" fill="#ececec"/><path d="M76 1275V1330" stroke="#888" stroke-width="4"/><path d="M49 1287V1313L33 1300z" fill="#000"/>
<rect x="2687" y="1275" width="23" height="54" fill="#e4e4e4"/><rect x="2712" y="1275" width="62" height="54" fill="#ececec"/><path d="M2712 1275V1330H2775V1275" fill="none" stroke="#888" stroke-width="4"/><path d="M2735 1287V1313L2751 1300z" fill="#000"/>
<use href="#om" transform="translate(33,36) scale(3)"/>
<text class="t" x="122" y="74" textLength="2172" lengthAdjust="spacingAndGlyphs">TSM:  01/09/2022 - 23/03/2026  (Daily bars)   Taiwan Semiconductor Manufactu @ NYSE  --  Template: RR POP</text>
<use href="#wc" x="2287" y="28"/>
<text class="w" x="33" y="147">Wed</text><text class="d" x="140" y="147" textLength="265" lengthAdjust="spacingAndGlyphs">08/04/2026:</text><text class="d" x="443" y="147" textLength="190" lengthAdjust="spacingAndGlyphs">TDofM=5</text><text class="d" x="668" y="147" textLength="210" lengthAdjust="spacingAndGlyphs">TDofY=66</text>
<path d="M18 305H2430M18 658H2430M18 876H2430M18 977H2430" stroke="#fff5fa" stroke-width="34" fill="none"/>
<rect x="605" y="172" width="780" height="62" fill="#fff8fc"/>
<rect x="2285" y="288" width="145" height="36" fill="#ffeef5"/><rect x="2285" y="640" width="145" height="36" fill="#ffeef5"/><rect x="2285" y="858" width="145" height="36" fill="#ffeef5"/><rect x="2285" y="959" width="145" height="36" fill="#ffeef5"/>
<text class="m" x="35" y="307" fill="#507018" stroke="#507018">21 EMA (C,21,F) = 346.69</text>
<text class="m" x="885" y="307" fill="#7a1010" stroke="#7a1010">55 EMA (C,55,F) = 340.47</text>
<path d="M18 305H2270M18 658H2270M18 876H2270M18 977H2270" stroke="#b05028" stroke-width="4" fill="none"/>
<path d="M18 1104H2170" stroke="#333" stroke-width="4"/>
<text class="l" x="2285" y="322" fill="#cc5040" style="font-weight:normal">388.57</text><text class="l" x="2285" y="675" fill="#cc5040" style="font-weight:normal">357.45</text><text class="l" x="2285" y="893" fill="#cc5040" style="font-weight:normal">338.22</text><text class="l" x="2285" y="994" fill="#cc5040" style="font-weight:normal">329.26</text>
<text class="l" x="2310" y="1121" fill="#333">18.18</text>
<path class="wk" stroke-width="6" d="M78 328V520M134 440V532M190 475V577M247 673V808M303 622V692M359 635V813M415 755V895M472 747V948M528 705V808M584 660V738M641 778V897M697 803V898M753 800V858M809 778V875M865 767V865M922 857V1027M978 882V1015M1034 815V1083"/>
<path d="M58 332h40v105h-40zM283 658h40v5h-40zM339 687h40v13h-40zM395 815h40v53h-40zM508 758h40v17h-40zM621 788h40v105h-40zM677 810h40v63h-40zM733 848h40v6h-40zM845 788h40v74h-40zM958 892h40v83h-40z" fill="#000"/>
<path d="M115 460h38v52h-38zM172 527h38v41h-38zM228 707h38v40h-38zM453 755h38v150h-38zM790 790h38v58h-38zM903 868h38v109h-38zM1015 860h38v198h-38z" fill="#fff" stroke="#222" stroke-width="5"/>
<rect x="565" y="692" width="38" height="8" fill="#bbb" stroke="#222" stroke-width="3"/>
<polyline class="e" stroke="#701808" points="78,900 130,888 190,870 250,868 360,853 450,850 530,850 580,843 700,845 800,845 920,845 1034,848"/>
<polyline class="e" stroke="#2f7a18" points="78,627 130,610 190,607 250,618 310,620 360,627 400,645 470,660 585,665 640,688 750,722 810,725 900,745 985,773 1037,776"/>
<polyline class="e" stroke="#8020c0" points="78,458 140,458 190,472 215,505 245,535 300,565 360,597 385,630 415,665 470,688 525,708 585,708 630,745 690,780 750,797 810,797 860,805 925,825 975,860 1034,860"/>
<text class="m" x="634" y="220" fill="#8020c0" stroke="#8020c0">8 EMA (C,7,F) = 339.28</text>
<text class="m" x="1410" y="220" fill="#000" stroke="#000">23/3/26 15:17 = 339.54 (+10.30)</text>
<text class="g" x="33" y="1162">© GenesisFT</text><rect x="34" y="1126" width="3" height="3" fill="#333"/>
<use href="#dia" x="806" y="1137"/><text x="806" y="1153" text-anchor="middle" style="font:42px 'Liberation Serif',serif" fill="#222">D</text>
<use href="#dia" x="1988" y="1137"/><text x="1988" y="1153" text-anchor="middle" style="font:42px 'Liberation Serif',serif" fill="#222">E</text>
<path d="M2171 1160V1093a67 67 0 1 1 67 67z" fill="#fff" stroke="#bbb" stroke-width="2"/>
<circle cx="2238" cy="1093" r="47" fill="#fff8f8" stroke="#a87070" stroke-width="7"/>
<text x="2238" y="1112" text-anchor="middle" style="font:54px 'Liberation Sans',sans-serif" fill="#222">8</text>
<path d="M2180 1135h3M2188 1135h3M2180 1143h3M2188 1143h3M2180 1151h3M2188 1151h3" stroke="#888" stroke-width="4"/>
<text class="x" x="163" y="1248">Mar-26</text><text class="x" x="1400" y="1248">Apr-26</text>
<path class="tk" d="M2485 172H2520M2503 230H2520M2503 286H2520M2503 343H2520M2503 403H2520M2485 459H2520M2503 515H2520M2503 572H2520M2503 628H2520M2503 684H2520M2485 741H2520M2503 800H2520M2503 855H2520M2503 912H2520M2503 968H2520M2485 1025H2520M2503 1081H2520M2503 1140H2520"/>
<text class="a" x="2543" y="482">375.00</text><text class="a" x="2543" y="762">350.00</text><text class="a" x="2543" y="1048">325.00</text>
<rect x="2523" y="735" width="202" height="56" fill="#0a780a"/><rect x="2523" y="791" width="202" height="26" fill="#403a00"/><text class="b" x="2526" y="800">346.69</text>
<rect x="2523" y="816" width="202" height="90" fill="#000"/><text class="b" x="2526" y="882">339.54</text>
</g>

<!-- ===== right toolbar ===== -->
<g transform="translate(1893,103)"><rect x=".5" y="-.5" width="25.5" height="22" rx="3.5" fill="url(#bp)" stroke="#555"/><path d="M9 6h7v10H9zM3 11h6M16 11h7M6 8l-3 3 3 3M20 8l3 3-3 3" fill="none" stroke="#222" stroke-width="1.3"/></g>
<g transform="translate(1893,128)"><use href="#b"/><circle cx="16" cy="9" r="6" fill="#fff" stroke="#111" stroke-width="2"/><path d="M12 14L4 22" stroke="#111" stroke-width="3.5"/><path d="M13 9h6M16 6v6" stroke="#111"/></g>
<g transform="translate(1893,157)"><use href="#b"/><circle cx="16" cy="9" r="6" fill="#eee" stroke="#999" stroke-width="2"/><path d="M12 14L4 22" stroke="#999" stroke-width="3.5"/></g>
<g transform="translate(1893,186)"><use href="#b"/><path d="M4 17L15 4L23 9L13 22z" fill="#f0e020" stroke="#555"/><path d="M4 17L9 11L17 17L13 23H8z" fill="#f020d0" stroke="#555"/></g>
<g transform="translate(1893,214)"><use href="#p"/><path d="M7 17V11a6.5 6.5 0 0 1 13 0V17h-4V11a2.5 2.5 0 0 0-5 0V17z" fill="#c81818" stroke="#601010" stroke-width=".7"/><path d="M5 22l2-3M10 23l1-3M17 23l-1-3M22 22l-2-3" stroke="#222"/></g>
<g transform="translate(1893,243)"><use href="#b"/><path d="M7 22L20 5L24 8L11 24H6z" fill="#f0d840" stroke="#222"/><path d="M4 12V5H10M23 16V23H17" stroke="#1a40e0" stroke-width="1.6" fill="none"/></g>
<g transform="translate(1893,272)"><use href="#b"/><rect x="3" y="3" width="21" height="21" fill="#1870e0"/><path d="M5 17C8 9 15 7 22 10C16 10 14 14 18 18H8z" fill="#fff"/></g>
<g transform="translate(1893,300)"><use href="#b"/><path d="M7 4v6M3 12h8M3 15h8M7 17v6M5 7l2 3 2-3M5 20l2-3 2 3" stroke="#222" fill="none"/><path d="M12 19C13 18 14 16 14 12C14 8 16 6 18 6S22 8 22 12C22 16 23 18 24 19z" fill="#f0e030" stroke="#999"/></g>
<g transform="translate(1893,329)"><use href="#b"/><path d="M4 22L16 11" stroke="#1a30e0" stroke-width="2"/><path d="M16 11L24 3" stroke="#e04040"/></g>
<g transform="translate(1893,358)"><use href="#b"/><path d="M4 17L23 8" stroke="#e01818" stroke-width="2"/><path d="M4 22L23 13" stroke="#1a30e0" stroke-width="2"/></g>
<g transform="translate(1893,387)"><use href="#b"/><path d="M4 4L12 22" stroke="#1a30e0" stroke-width="2.2"/><text x="11" y="21" style="font:bold 19px 'Liberation Serif',serif" fill="#1a30e0">$</text></g>
<g transform="translate(1893,415)"><use href="#b"/><path d="M3 12L23 4M3 22L23 14" stroke="#1a30e0" stroke-width="1.5"/><path d="M3 17L23 9" stroke="#e01818" stroke-width="1.5"/><path d="M7 8L18 22" stroke="#c08080"/></g>
<g transform="translate(1893,444)"><use href="#b"/><path d="M9 13H23" stroke="#1a30e0" stroke-width="2.5"/><path d="M9 9L4 13L9 17z" fill="#1a30e0"/></g>
<g transform="translate(1893,473)"><use href="#b"/><path d="M3 13.5H24" stroke="#1a30e0" stroke-width="2.5"/></g>
<g transform="translate(1893,501)"><use href="#b"/><path d="M13.5 3V24" stroke="#1a30e0" stroke-width="2.5"/></g>
<g transform="translate(1893,530)"><use href="#b"/><path d="M4 23L22 5M10 5H22V17" stroke="#1a30e0" stroke-width="2.5" fill="none"/></g>
<g transform="translate(1893,559)"><use href="#b"/><text x="13.5" y="23" text-anchor="middle" style="font:bold 26px 'Liberation Sans',sans-serif" fill="#1a30e0">A</text></g>
<g transform="translate(1893,587)"><use href="#b"/><rect x="7" y="3" width="9" height="9" fill="#f0f020"/><circle cx="21" cy="10" r="4" fill="#d020e0"/><path d="M9 11l6 6-6 6-6-6z" fill="#a04010"/></g>
<g transform="translate(1893,616)"><use href="#b"/><text x="13.5" y="20" text-anchor="middle" style="font:bold 18px 'Liberation Sans',sans-serif" fill="#1a30e0">{ }</text></g>
<g transform="translate(1893,645)"><use href="#b"/><rect x="4" y="4" width="12" height="12" fill="#fff" stroke="#1a30e0" stroke-width="1.8"/><circle cx="17" cy="17" r="6" fill="#e8a860" stroke="#804010" stroke-width="1.6"/></g>
<g transform="translate(1893,674)"><use href="#b"/><ellipse cx="13.5" cy="13.5" rx="10" ry="5" fill="#fff" stroke="#1a30e0" stroke-width="2"/></g>
<g transform="translate(1893,702)"><use href="#b"/><circle cx="13.5" cy="13.5" r="10" fill="#fff" stroke="#1a30e0" stroke-width="2"/><circle cx="13.5" cy="13.5" r="6.5" fill="#efe0d0" stroke="#a06030"/></g>
<g transform="translate(1893,731)"><use href="#b"/><path d="M12 4V22M12 4H24M12 9H24" stroke="#1a30e0" stroke-width="2.4" fill="none"/><path d="M4 19l8-5v10z" fill="#1a30e0"/></g>
<g transform="translate(1893,760)"><use href="#b"/><path d="M3 5l4 9 4-9" fill="none" stroke="#333" stroke-width="1.5"/><path d="M14 7h10M14 12h10" stroke="#333"/><path d="M15 17h9M15 21h9" stroke="#b0a030" stroke-width="2.4"/></g>
<g transform="translate(1893,789)"><use href="#b"/><path d="M4 5H23M7 10H20M7 15H20M4 22H23M13.5 5V22" stroke="#1a30e0" stroke-width="1.7" fill="none"/></g>
<g transform="translate(1893,817)"><use href="#b"/><path d="M4 4H23M4 22H23" stroke="#1a30e0" stroke-width="1.7"/><path d="M7 9H20M7 17H20" stroke="#b05020" stroke-width="1.7"/><text x="13.5" y="19" text-anchor="middle" style="font:bold 12px 'Liberation Sans',sans-serif" fill="#222">2</text></g>
<g transform="translate(1893,846)"><use href="#b"/><path d="M4 4H23M4 22H23M7 9H20M7 17H20" stroke="#1a30e0" stroke-width="1.7"/><text x="13.5" y="19" text-anchor="middle" style="font:bold 12px 'Liberation Sans',sans-serif" fill="#222">3</text></g>
<g transform="translate(1893,875)"><use href="#b"/><path d="M4 4H23M7 9H20" stroke="#207a20" stroke-width="1.7"/><path d="M7 17H20M4 22H23" stroke="#1a30e0" stroke-width="1.7"/><text x="13.5" y="19" text-anchor="middle" style="font:bold 12px 'Liberation Sans',sans-serif" fill="#222">4</text></g>
<g transform="translate(1893,903)"><use href="#b"/><path d="M4 4H23M7 9H20" stroke="#b05020" stroke-width="1.7"/><path d="M4 14H23M7 19H20M13.5 9V24" stroke="#1a30e0" stroke-width="1.7"/></g>
<g transform="translate(1893,932)"><use href="#b"/><path d="M4 21L22 7M9 22L24 12M6 16L20 3" stroke="#1a30e0" stroke-width="1.5"/></g>
<g transform="translate(1893,961)"><use href="#b"/><path d="M3 23L24 5" stroke="#c04060"/><path d="M3 23L24 12" stroke="#b09070"/><path d="M3 23L24 18" stroke="#705030"/></g>
<g transform="translate(1893,990)"><use href="#b"/><path d="M8 15h2M12.5 15h2M17 15h2" stroke="#222" stroke-width="2"/></g>
</svg>
</body></html>
